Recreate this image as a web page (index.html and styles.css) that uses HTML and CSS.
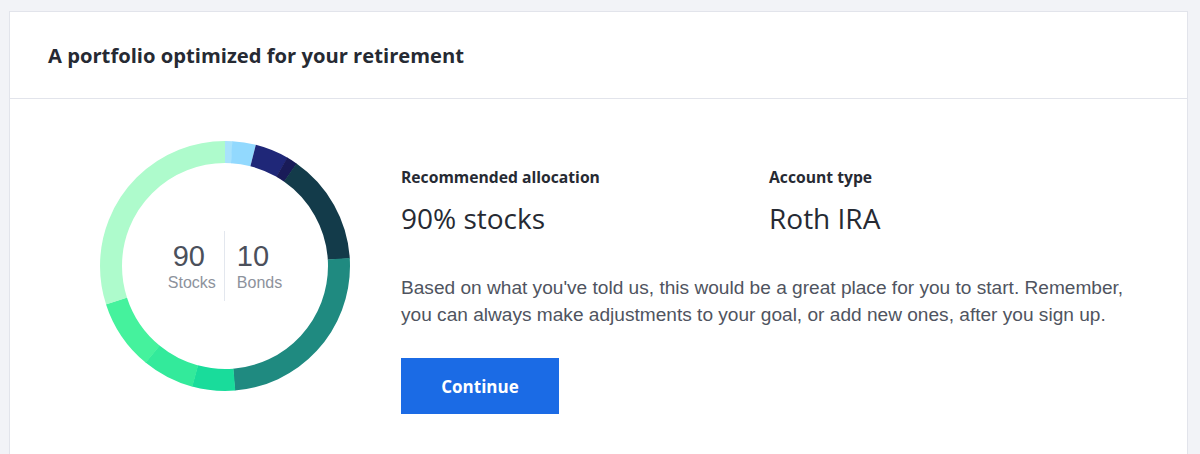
FILE: index.html
```html
<!DOCTYPE html>
<html lang="en">
<head>
<meta charset="utf-8">
<title>Portfolio</title>
<link rel="stylesheet" href="styles.css">
</head>
<body>
<div class="card">
  <div class="card-header">
    <h1 class="title">A portfolio optimized for your retirement</h1>
  </div>
  <div class="card-body">
    <div class="donut">
      <svg class="donut-svg" width="250" height="250" viewBox="0 0 250 250">
        <g transform="rotate(-90 125 125)" fill="none" stroke-width="22">
          <circle cx="125" cy="125" r="114" pathLength="360" stroke="#a8e2fc" stroke-dasharray="3.6 360" stroke-dashoffset="0"/>
          <circle cx="125" cy="125" r="114" pathLength="360" stroke="#92d9fe" stroke-dasharray="10.9 360" stroke-dashoffset="-3.4"/>
          <circle cx="125" cy="125" r="114" pathLength="360" stroke="#1f2778" stroke-dasharray="15.8 360" stroke-dashoffset="-14.3"/>
          <circle cx="125" cy="125" r="114" pathLength="360" stroke="#191b58" stroke-dasharray="5.2 360" stroke-dashoffset="-29.9"/>
          <circle cx="125" cy="125" r="114" pathLength="360" stroke="#133b4a" stroke-dasharray="51.6 360" stroke-dashoffset="-34.9"/>
          <circle cx="125" cy="125" r="114" pathLength="360" stroke="#1f8a80" stroke-dasharray="89.1 360" stroke-dashoffset="-86.3"/>
          <circle cx="125" cy="125" r="114" pathLength="360" stroke="#19dc9b" stroke-dasharray="20.1 360" stroke-dashoffset="-175.2"/>
          <circle cx="125" cy="125" r="114" pathLength="360" stroke="#33ea9b" stroke-dasharray="24.4 360" stroke-dashoffset="-195.1"/>
          <circle cx="125" cy="125" r="114" pathLength="360" stroke="#45f29d" stroke-dasharray="32.9 360" stroke-dashoffset="-219.3"/>
          <circle cx="125" cy="125" r="114" pathLength="360" stroke="#aefbcc" stroke-dasharray="108 360" stroke-dashoffset="-252"/>
        </g>
      </svg>
      <div class="donut-center">
        <div class="stat stat-left">
          <div class="stat-num">90</div>
          <div class="stat-label">Stocks</div>
        </div>
        <div class="divider"></div>
        <div class="stat stat-right">
          <div class="stat-num">10</div>
          <div class="stat-label">Bonds</div>
        </div>
      </div>
    </div>
    <div class="info">
      <div class="facts">
        <div class="fact">
          <div class="fact-label">Recommended allocation</div>
          <div class="fact-value">90% stocks</div>
        </div>
        <div class="fact">
          <div class="fact-label">Account type</div>
          <div class="fact-value">Roth IRA</div>
        </div>
      </div>
      <p class="desc">Based on what you've told us, this would be a great place for you to start. Remember,<br>you can always make adjustments to your goal, or add new ones, after you sign up.</p>
      <button class="btn">Continue</button>
    </div>
  </div>
</div>
</body>
</html>
```

FILE: styles.css
```css
* { box-sizing: border-box; }
html, body { margin: 0; padding: 0; }
body {
  background: #f2f3f7;
  padding: 11px 12px 0 9px;
  font-family: "Open Sans", "Liberation Sans", sans-serif;
  color: #262a33;
  height: 454px;
  overflow: hidden;
}
.card {
  background: #fff;
  border: 1px solid #e2e4eb;
  min-height: 460px;
}
.card-header {
  height: 87px;
  padding: 0 38px;
  display: flex;
  align-items: center;
  border-bottom: 1px solid #e2e4eb;
}
.title {
  margin: 0;
  font-size: 20.2px;
  font-weight: 700;
  color: #262a33;
}
.card-body {
  display: flex;
  padding: 42px 0 0 90px;
  gap: 51px;
}
.donut {
  position: relative;
  width: 250px;
  height: 250px;
  flex: none;
}
.donut-svg { display: block; }
.donut-center {
  position: absolute;
  inset: 0;
  display: flex;
  align-items: center;
  justify-content: center;
}
.stat {
  display: flex;
  flex-direction: column;
}
.stat-left {
  align-items: center;
  padding-right: 8px;
}
.stat-right {
  align-items: flex-start;
  padding-left: 12px;
}
.stat-num {
  font-family: "Liberation Sans", Arial, sans-serif;
  font-size: 29px;
  line-height: 34px;
  color: #4b505b;
}
.stat-left .stat-num { margin-right: 6px; }
.stat-label {
  font-family: "Liberation Sans", Arial, sans-serif;
  font-size: 16px;
  line-height: 20px;
  color: #8d929c;
}
.divider {
  width: 1px;
  height: 70px;
  background: #e3e7ee;
}
.info {
  padding-top: 26px;
}
.facts {
  display: flex;
}
.fact {
  width: 368px;
}
.fact-label {
  font-size: 15.7px;
  font-weight: 700;
  line-height: 20px;
  color: #262a33;
}
.fact-value {
  margin-top: 13px;
  font-size: 28px;
  line-height: 36px;
  color: #262a33;
}
.desc {
  margin: 38px 0 0;
  font-family: "Liberation Sans", Arial, sans-serif;
  font-size: 19.1px;
  line-height: 27px;
  color: #4f5460;
}
.btn {
  display: block;
  margin-top: 30px;
  width: 158px;
  height: 56px;
  border: 0;
  background: #1b6be5;
  color: #fff;
  font-family: "Open Sans", "Liberation Sans", sans-serif;
  font-size: 17px;
  font-weight: 700;
  cursor: pointer;
}
```
